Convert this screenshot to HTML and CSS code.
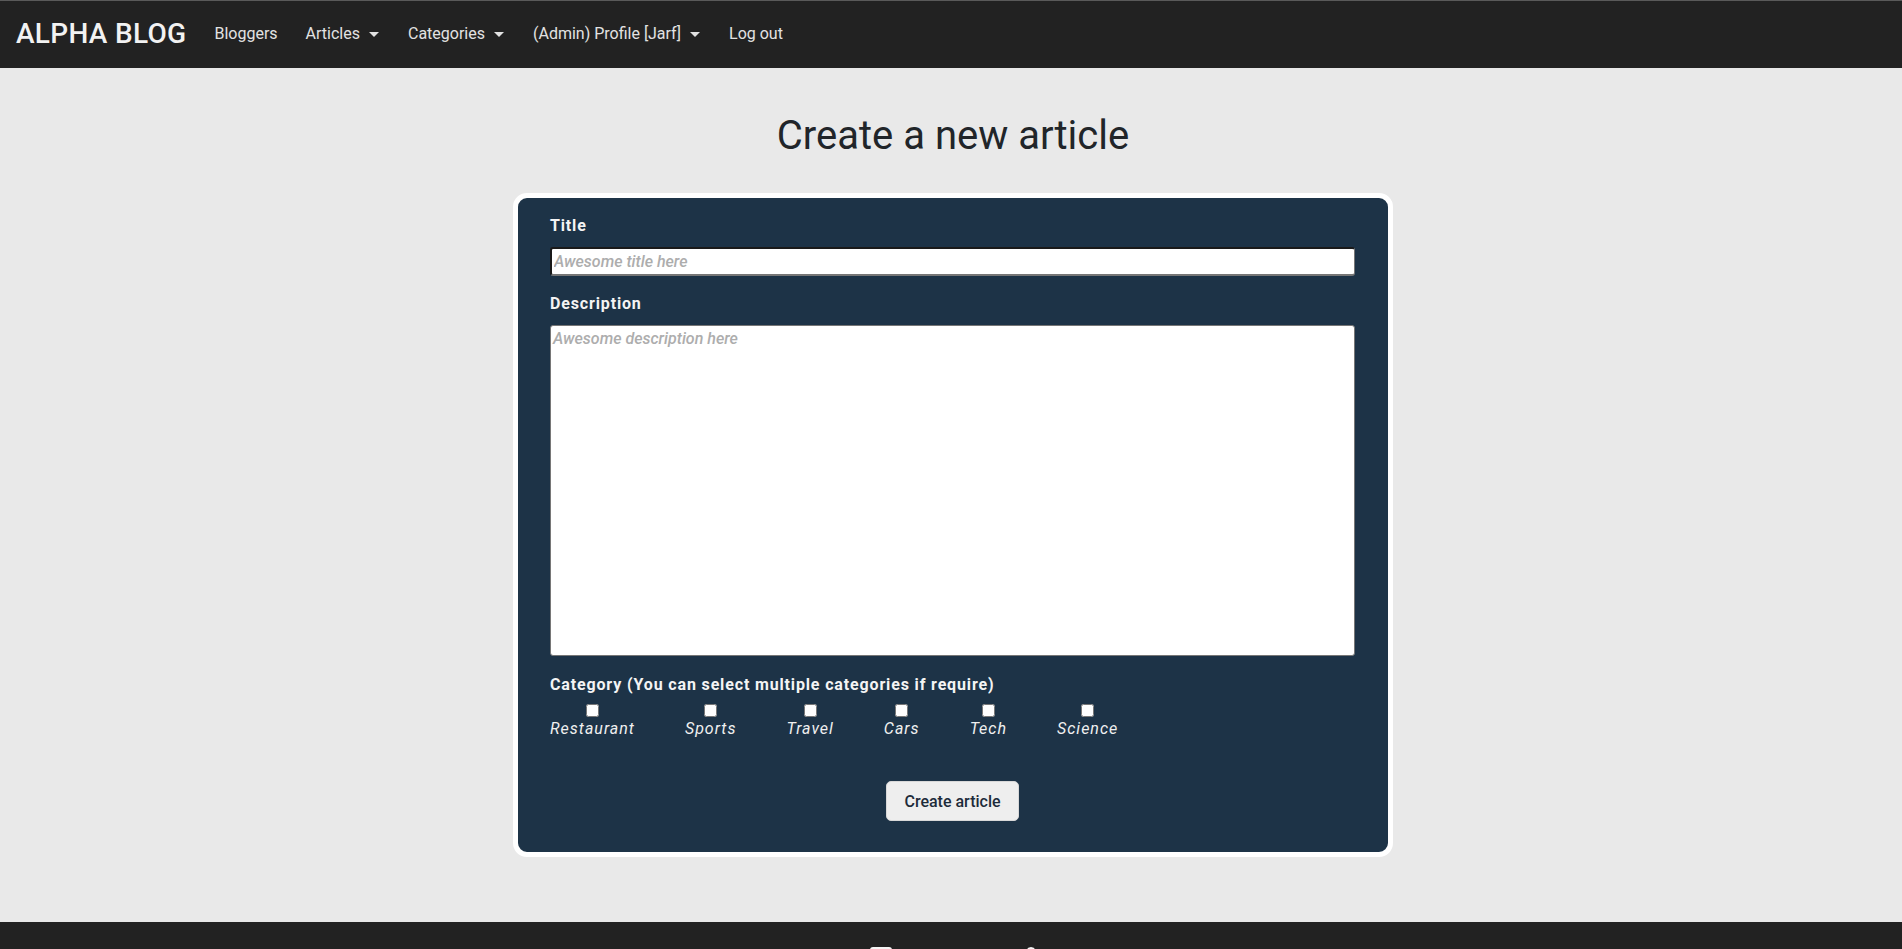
FILE: index.html
```html
<!DOCTYPE html>
<html lang="en">
<head>
<meta charset="utf-8">
<title>Alpha Blog - Create a new article</title>
<link rel="stylesheet" href="styles.css">
</head>
<body>
<nav class="navbar">
  <a class="brand" href="#">ALPHA BLOG</a>
  <ul class="nav">
    <li><a class="nav-link" href="#">Bloggers</a></li>
    <li><a class="nav-link dropdown" href="#">Articles</a></li>
    <li><a class="nav-link dropdown" href="#">Categories</a></li>
    <li><a class="nav-link dropdown" href="#">(Admin) Profile [Jarf]</a></li>
    <li><a class="nav-link" href="#">Log out</a></li>
  </ul>
</nav>

<main class="main">
  <h1 class="page-title">Create a new article</h1>
  <form class="card">
    <label class="field-label" for="title">Title</label>
    <input class="text-input" id="title" type="text" placeholder="Awesome title here">

    <label class="field-label" for="desc">Description</label>
    <textarea class="text-area" id="desc" placeholder="Awesome description here"></textarea>

    <div class="field-label cat-label">Category (You can select multiple categories if require)</div>
    <div class="cats">
      <label class="cat"><input type="checkbox"><span>Restaurant</span></label>
      <label class="cat"><input type="checkbox"><span>Sports</span></label>
      <label class="cat"><input type="checkbox"><span>Travel</span></label>
      <label class="cat"><input type="checkbox"><span>Cars</span></label>
      <label class="cat"><input type="checkbox"><span>Tech</span></label>
      <label class="cat"><input type="checkbox"><span>Science</span></label>
    </div>

    <div class="actions">
      <button class="btn" type="button">Create article</button>
    </div>
  </form>
</main>

<footer class="footer">
  <div class="footer-icons">
    <span class="ficon square"></span>
    <span class="ficon round"></span>
  </div>
</footer>
</body>
</html>
```

FILE: styles.css
```css
* { box-sizing: border-box; }

html, body {
  margin: 0;
  padding: 0;
}

body {
  background: #e9e9e9;
  font-family: Roboto, "Liberation Sans", Arial, sans-serif;
  color: #212529;
  font-size: 16px;
  line-height: 1.5;
}

.navbar {
  display: flex;
  align-items: center;
  height: 68px;
  background: #222222;
  border-top: 1px solid #5a5a5a;
  padding: 0 0 0 16px;
}

.brand {
  color: #f2f2f2;
  text-decoration: none;
  font-size: 28px;
  font-weight: 500;
  letter-spacing: 0.3px;
  margin-right: 14px;
  margin-top: -2px;
}

.nav {
  display: flex;
  list-style: none;
  margin: 0;
  padding: 0;
}

.nav-link {
  display: flex;
  align-items: center;
  color: #e2e2e2;
  text-decoration: none;
  font-size: 16px;
  padding: 0 14px;
  margin-top: -1px;
}

.dropdown::after {
  content: "";
  display: inline-block;
  margin-left: 9px;
  margin-right: 1px;
  border-top: 5px solid #e2e2e2;
  border-left: 5px solid transparent;
  border-right: 5px solid transparent;
}

.main {
  padding: 44px 0 65px 4px;
}

.page-title {
  margin: 0;
  text-align: center;
  font-size: 40px;
  font-weight: 400;
  line-height: 48px;
  color: #212529;
}

.card {
  width: 880px;
  margin: 33px auto 0;
  background: #1d3347;
  border: 5px solid #ffffff;
  border-radius: 14px;
  padding: 16px 33px 31px 32px;
  display: flex;
  flex-direction: column;
}

.field-label {
  display: block;
  color: #f4f4f4;
  font-size: 16px;
  font-weight: 700;
  letter-spacing: 0.85px;
  line-height: 24px;
}

.text-input {
  margin-top: 9px;
  height: 29px;
  width: 100%;
  border-style: solid;
  border-width: 2px 1px 2px 2px;
  border-color: #1a1a1a #767676 #767676 #1a1a1a;
  border-radius: 3px;
  background: #ffffff;
  padding: 0 2px;
  font-family: Roboto, "Liberation Sans", Arial, sans-serif;
  font-size: 16px;
  margin-bottom: 16px;
}

.text-area {
  margin-top: 9px;
  height: 331px;
  width: 100%;
  border: 1px solid #767676;
  border-radius: 3px;
  background: #ffffff;
  padding: 3px 2px 1px;
  resize: none;
  font-family: Roboto, "Liberation Sans", Arial, sans-serif;
  font-size: 16px;
  line-height: 20px;
  margin-bottom: 17px;
}

.text-input::placeholder,
.text-area::placeholder {
  color: #adadad;
  font-style: italic;
  font-weight: 500;
}

.cats {
  display: flex;
  gap: 50px;
  margin-top: 7px;
}

.cat {
  display: flex;
  flex-direction: column;
  align-items: center;
  color: #f0f0f0;
  font-style: italic;
  font-size: 16px;
  letter-spacing: 1px;
  line-height: 24px;
}

.cat input {
  margin: 0;
  width: 13px;
  height: 13px;
}

.actions {
  display: flex;
  justify-content: center;
  margin-top: 40px;
}

.btn {
  height: 40px;
  padding: 0 17px;
  background: #eeeeee;
  border: 1px solid #d8d8d8;
  border-radius: 5px;
  color: #1d2b3a;
  font-family: Roboto, "Liberation Sans", Arial, sans-serif;
  font-size: 16px;
  font-weight: 500;
}

.footer {
  background: #222222;
  height: 120px;
  padding-top: 25px;
}

.footer-icons {
  display: flex;
  justify-content: center;
  gap: 132px;
  padding-left: 6px;
}

.ficon {
  display: block;
  background: #f4f4f4;
}

.ficon.square {
  width: 22px;
  height: 22px;
  border-radius: 3px;
}

.ficon.round {
  width: 14px;
  height: 22px;
  border-radius: 50% 50% 2px 2px;
}
```
